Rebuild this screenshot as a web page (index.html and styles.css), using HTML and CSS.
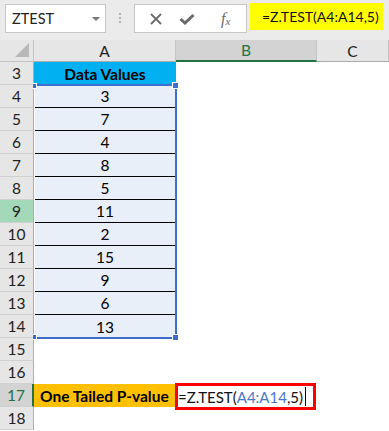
FILE: index.html
```html
<!DOCTYPE html>
<html>
<head>
<meta charset="utf-8">
<link rel="stylesheet" href="styles.css">
</head>
<body>
<div class="toolbar">
  <div class="namebox"><span>ZTEST</span><span class="caret"></span></div>
  <div class="grip"><i></i><i></i><i></i></div>
  <div class="fbtns">
    <svg class="ico-x" width="12" height="12" viewBox="0 0 12 12"><path d="M1 1L11 11M11 1L1 11" stroke="#6b6b6b" stroke-width="1.8" fill="none"/></svg>
    <svg class="ico-ok" width="16" height="12" viewBox="0 0 16 12"><path d="M1.5 6L6 10L14.5 2" stroke="#6b6b6b" stroke-width="3" fill="none"/></svg>
    <span class="fx">f<sub>x</sub></span>
  </div>
  <div class="fbar">=Z.TEST(A4:A14,5)</div>
</div>
<div class="sheet">
  <div class="corner"><span class="tri"></span></div>
  <div class="ch">A</div>
  <div class="ch chsel">B</div>
  <div class="ch">C</div>

  <div class="rh">3</div><div class="c hdr">Data Values</div><div class="c"></div><div class="c"></div>
  <div class="rh">4</div><div class="c d">3</div><div class="c"></div><div class="c"></div>
  <div class="rh">5</div><div class="c d">7</div><div class="c"></div><div class="c"></div>
  <div class="rh">6</div><div class="c d">4</div><div class="c"></div><div class="c"></div>
  <div class="rh">7</div><div class="c d">8</div><div class="c"></div><div class="c"></div>
  <div class="rh">8</div><div class="c d">5</div><div class="c"></div><div class="c"></div>
  <div class="rh rh9">9</div><div class="c d">11</div><div class="c"></div><div class="c"></div>
  <div class="rh">10</div><div class="c d">2</div><div class="c"></div><div class="c"></div>
  <div class="rh">11</div><div class="c d">15</div><div class="c"></div><div class="c"></div>
  <div class="rh">12</div><div class="c d">9</div><div class="c"></div><div class="c"></div>
  <div class="rh">13</div><div class="c d">6</div><div class="c"></div><div class="c"></div>
  <div class="rh">14</div><div class="c d last">13</div><div class="c"></div><div class="c"></div>
  <div class="rh">15</div><div class="c"></div><div class="c"></div><div class="c"></div>
  <div class="rh">16</div><div class="c"></div><div class="c"></div><div class="c"></div>
  <div class="rh rhsel">17</div><div class="c label">One Tailed P-value</div><div class="c edit"><div class="editor">=Z.TEST(<span class="ref">A4:A14</span>,5)<span class="cursor"></span></div></div><div class="c"></div>
  <div class="rh">18</div><div class="c"></div><div class="c"></div><div class="c"></div>

  <div class="sel">
    <span class="h h-tl"></span><span class="h h-tr"></span><span class="h h-bl"></span><span class="h h-br"></span>
  </div>
</div>
</body>
</html>
```
FILE: styles.css
```css
* { box-sizing: border-box; }
html, body { margin: 0; padding: 0; }
body {
  width: 389px;
  height: 431px;
  overflow: hidden;
  background: #fff;
  font-family: Lato, "Open Sans", sans-serif;
  color: #000;
}
.toolbar {
  height: 40px;
  background: #ebebeb;
  display: flex;
  align-items: flex-start;
  padding-left: 5px;
}
.namebox {
  margin-top: 4px;
  width: 101px;
  height: 29px;
  background: #fff;
  border: 1px solid #c6c6c6;
  display: flex;
  align-items: center;
  justify-content: space-between;
  padding: 0 5px 0 6px;
  font-size: 14.5px;
  color: #222;
}
.caret {
  width: 0; height: 0;
  border-left: 4px solid transparent;
  border-right: 4px solid transparent;
  border-top: 4px solid #777;
}
.grip {
  width: 28px;
  height: 36px;
  display: flex;
  flex-direction: column;
  align-items: center;
  justify-content: center;
  gap: 2px;
}
.grip i { width: 2px; height: 2px; background: #b3b3b3; display: block; }
.fbtns {
  margin-top: 4px;
  width: 113px;
  height: 29px;
  background: #fff;
  border: 1px solid #c6c6c6;
  display: flex;
  align-items: center;
  padding-left: 15px;
}
.ico-x { margin-right: 17px; }
.ico-ok { margin-right: 26px; }
.fx {
  font-family: "Liberation Serif", serif;
  font-style: italic;
  font-size: 16px;
  color: #6b6b6b;
  line-height: 1;
}
.fx sub { font-size: 11px; vertical-align: -1px; }
.fbar {
  margin-top: 3px;
  margin-left: 3px;
  width: 133px;
  height: 27px;
  background: #ffff00;
  font-size: 14px;
  display: flex;
  align-items: center;
  padding-left: 12px;
  color: #111;
  white-space: nowrap;
}
.sheet {
  position: relative;
  display: grid;
  grid-template-columns: 34px 142px 141px 72px;
  grid-template-rows: 22px;
  grid-auto-rows: 23px;
}
.corner {
  background: #e6e6e6;
  border-right: 1px solid #c4c4c4;
  border-bottom: 1px solid #c4c4c4;
  position: relative;
}
.tri {
  position: absolute;
  right: 4px;
  bottom: 4px;
  width: 0; height: 0;
  border-left: 14px solid transparent;
  border-bottom: 14px solid #b8b8b8;
}
.ch {
  background: #e6e6e6;
  border-right: 1px solid #c4c4c4;
  border-bottom: 1px solid #ababab;
  display: flex;
  align-items: center;
  justify-content: center;
  font-size: 15.5px;
  color: #222;
}
.chsel {
  background: #d3d3d3;
  border-bottom: 2px solid #217346;
  color: #217346;
}
.rh {
  background: #e6e6e6;
  border-right: 1px solid #ababab;
  border-bottom: 1px solid #d0d0d0;
  display: flex;
  align-items: center;
  justify-content: center;
  font-size: 15.5px;
  color: #222;
}
.rh9 { background: #a3d9b8; }
.rhsel {
  background: #d3d3d3;
  border-right: 2px solid #217346;
  color: #217346;
}
.c {
  display: flex;
  align-items: center;
  justify-content: center;
  font-size: 15.5px;
}
.hdr {
  background: #00b0f0;
  font-weight: bold;
}
.d {
  background: #e9eff8;
  border-bottom: 1px solid #000;
  margin: 0 1px;
}
.d.last { border-bottom: none; }
.label {
  background: #ffc000;
  font-weight: bold;
  justify-content: flex-start;
  padding-left: 6px;
}
.edit { position: relative; }
.editor {
  position: absolute;
  left: -1px;
  top: -1px;
  width: 141px;
  height: 27px;
  border: 3px solid #ff0000;
  background: #fff;
  display: flex;
  align-items: center;
  font-size: 15px;
  color: #111;
  white-space: nowrap;
}
.ref { color: #4a76c9; }
.cursor {
  display: inline-block;
  width: 1px;
  height: 19px;
  background: #000;
  margin-left: 2px;
}
.sel {
  position: absolute;
  left: 34px;
  top: 44px;
  width: 143px;
  height: 255px;
  border-top: 2px solid #3c6fcd;
  border-right: 2px solid #3c6fcd;
  border-bottom: 2px solid #3c6fcd;
  pointer-events: none;
}
.h {
  position: absolute;
  background: #3c6fcd;
  border: 1px solid #fff;
}
.h-tl { left: -1px; top: -3px; width: 4px; height: 6px; border-left: none; }
.h-tr { right: -4px; top: -4px; width: 7px; height: 7px; }
.h-bl { left: -1px; bottom: -3px; width: 4px; height: 6px; border-left: none; }
.h-br { right: -4px; bottom: -4px; width: 7px; height: 7px; }
```
